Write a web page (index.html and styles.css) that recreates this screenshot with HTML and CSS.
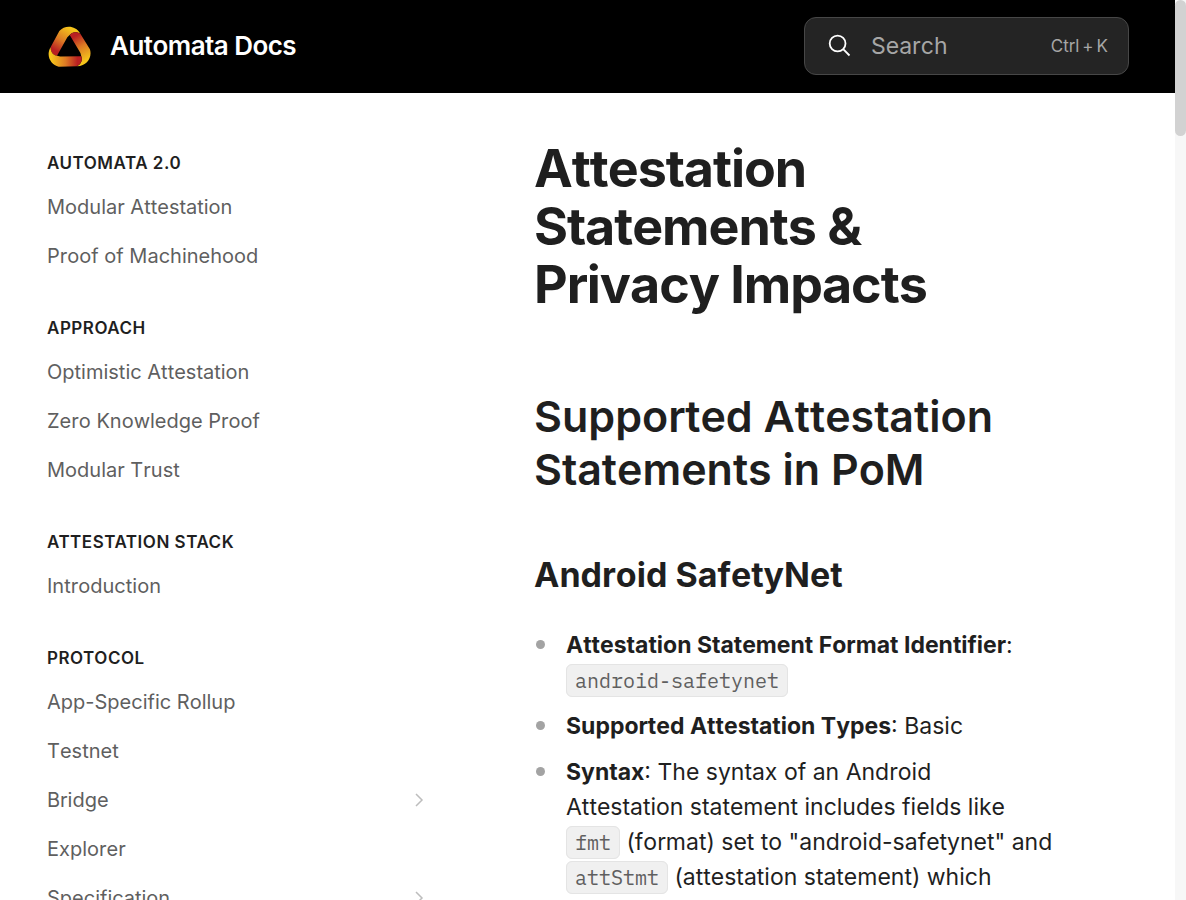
FILE: index.html
```html
<!DOCTYPE html>
<html lang="en">
<head>
<meta charset="utf-8">
<meta name="viewport" content="width=device-width, initial-scale=1">
<title>Attestation Statements &amp; Privacy Impacts | Automata Docs</title>
<link rel="stylesheet" href="styles.css">
</head>
<body>
<div class="app">
  <div class="page">
    <header class="topbar">
      <a class="brand" href="#">
        <svg class="brand-logo" viewBox="21 14 132 126" aria-hidden="true">
          <defs>
            <linearGradient id="ribbon" gradientUnits="userSpaceOnUse" x1="42" y1="98" x2="88" y2="22">
              <stop offset="0.1" stop-color="#b92022"/>
              <stop offset="0.5" stop-color="#dc7a24"/>
              <stop offset="1" stop-color="#f6c51b"/>
            </linearGradient>
            <path id="fold" d="M31.700 80.400 L58 32 C74 14 106 14 121 40 C106 32 96 36 89 44 L82 51 L51 106 C40.700 104 32 97.400 31.700 80.400Z"/>
          </defs>
          <g fill="url(#ribbon)">
            <use href="#fold"/>
            <use href="#fold" transform="rotate(120 88 86)"/>
            <use href="#fold" transform="rotate(240 88 86)"/>
          </g>
        </svg>
        <span>Automata Docs</span>
      </a>
      <label class="search">
        <svg class="search-icon" viewBox="0 0 24 24" aria-hidden="true">
          <circle cx="10.600" cy="9.500" r="7.900"/>
          <path d="M16.200 15.100 L22.500 21.500"/>
        </svg>
        <input class="search-input" type="text" placeholder="Search" aria-label="Search">
        <kbd class="search-keys"><span>Ctrl</span><span>+</span><span>K</span></kbd>
      </label>
    </header>
    <div class="body">
      <nav class="sidebar" aria-label="Documentation">
        <section class="group">
          <h2 class="group-title">AUTOMATA 2.0</h2>
          <a class="nav-link" href="#">Modular Attestation</a>
          <a class="nav-link" href="#">Proof of Machinehood</a>
        </section>
        <section class="group">
          <h2 class="group-title">APPROACH</h2>
          <a class="nav-link" href="#">Optimistic Attestation</a>
          <a class="nav-link" href="#">Zero Knowledge Proof</a>
          <a class="nav-link" href="#">Modular Trust</a>
        </section>
        <section class="group">
          <h2 class="group-title">ATTESTATION STACK</h2>
          <a class="nav-link" href="#">Introduction</a>
        </section>
        <section class="group">
          <h2 class="group-title">PROTOCOL</h2>
          <a class="nav-link" href="#">App-Specific Rollup</a>
          <a class="nav-link" href="#">Testnet</a>
          <a class="nav-link" href="#">Bridge
            <svg class="chevron" viewBox="0 0 9 14" aria-hidden="true"><path d="M1 1 L7 7 L1 13"/></svg></a>
          <a class="nav-link" href="#">Explorer</a>
          <a class="nav-link" href="#">Specification
            <svg class="chevron" viewBox="0 0 9 14" aria-hidden="true"><path d="M1 1 L7 7 L1 13"/></svg></a>
        </section>
      </nav>
      <main class="content">
        <h1 class="title">Attestation Statements &amp; Privacy Impacts</h1>
        <h2 class="section-title">Supported Attestation Statements in PoM</h2>
        <h3 class="sub-title">Android SafetyNet</h3>
        <ul class="facts">
          <li class="fact"><strong>Attestation Statement Format Identifier</strong>: <code class="code">android-safetynet</code></li>
          <li class="fact"><strong>Supported Attestation Types</strong>: Basic</li>
          <li class="fact"><strong>Syntax</strong>: The syntax of an Android Attestation statement includes fields like <code class="code">fmt</code> (format) set to "android-safetynet" and <code class="code">attStmt</code> (attestation statement) which</li>
        </ul>
      </main>
    </div>
  </div>
  <div class="scroll-track" aria-hidden="true"><div class="scroll-thumb"></div></div>
</div>
</body>
</html>
```
FILE: styles.css
```css
* {
  box-sizing: border-box;
}

body {
  margin: 0;
  background: #fff;
  color: #1f1f1f;
  font-family: Inter, "Liberation Sans", sans-serif;
  font-kerning: none;
}

.app {
  display: flex;
  height: 100vh;
  overflow: hidden;
}

.page {
  flex: 1;
  min-width: 0;
}

.topbar {
  display: flex;
  align-items: center;
  justify-content: space-between;
  padding: 17px 46px 18px 47px;
  background: #000;
}

.brand {
  display: flex;
  align-items: center;
  gap: 19px;
  color: #fff;
  font-size: 26px;
  font-weight: 600;
  line-height: 36px;
  letter-spacing: -0.02em;
  text-decoration: none;
}

.brand-logo {
  width: 44px;
  height: 42px;
}

.search {
  display: flex;
  align-items: center;
  gap: 20px;
  width: 325px;
  height: 58px;
  padding: 0 20px 0 22px;
  border: 1px solid #474747;
  border-radius: 12px;
  background: #242424;
}

.search-icon {
  flex: none;
  width: 24px;
  height: 24px;
  fill: none;
  stroke: #fff;
  stroke-width: 1.8;
}

.search-input {
  flex: 1;
  min-width: 0;
  padding: 0;
  border: 0;
  outline: 0;
  background: transparent;
  color: #fff;
  font: inherit;
  font-size: 23px;
  line-height: 35px;
}

.search-input::placeholder {
  color: #a6a6a6;
  opacity: 1;
}

.search-keys {
  display: flex;
  gap: 3px;
  color: #a6a6a6;
  font: inherit;
  font-size: 17px;
}

.body {
  display: flex;
  gap: 93px;
}

.sidebar {
  flex: 0 0 394px;
  margin-left: 47px;
  padding-top: 51px;
}

.group {
  margin-bottom: 29px;
}

.group-title {
  margin: 0;
  font-size: 17px;
  font-weight: 600;
  font-kerning: normal;
  line-height: 38px;
  letter-spacing: 0.03em;
}

.nav-link {
  display: flex;
  align-items: center;
  justify-content: space-between;
  height: 49px;
  padding-right: 17px;
  color: #5f5f5f;
  font-size: 20px;
  text-decoration: none;
}

.chevron {
  width: 9px;
  height: 14px;
  fill: none;
  stroke: #bdbdbd;
  stroke-width: 1.5;
}

.content {
  flex: 1;
  min-width: 0;
  padding: 47px 122px 0 0;
}

.title {
  margin: 0;
  font-size: 52px;
  font-weight: 700;
  line-height: 58px;
  letter-spacing: -0.02em;
}

.section-title {
  margin: 76px 0 0;
  font-size: 43px;
  font-weight: 600;
  line-height: 53px;
}

.sub-title {
  margin: 57px 0 0;
  font-size: 34px;
  font-weight: 700;
  line-height: 44px;
}

.facts {
  display: flex;
  flex-direction: column;
  gap: 11px;
  margin: 31px 0 0;
  padding: 0;
  list-style: none;
}

.fact {
  position: relative;
  padding-left: 32px;
  font-size: 23px;
  line-height: 35px;
}

.fact::before {
  content: "";
  position: absolute;
  top: 12px;
  left: 2px;
  width: 9px;
  height: 9px;
  border-radius: 50%;
  background: #a3a3a3;
}

.code {
  padding: 2px 8px;
  border: 1px solid #e4e4e4;
  border-radius: 6px;
  background: #f0f0f0;
  color: #5f5f5f;
  font-family: "IBM Plex Mono", "Liberation Mono", monospace;
  font-size: 20px;
  line-height: 24px;
}

.scroll-track {
  flex: 0 0 11px;
  background: #f7f7f7;
}

.scroll-thumb {
  height: 136px;
  border-radius: 6px;
  background: #d2d2d2;
}
```
